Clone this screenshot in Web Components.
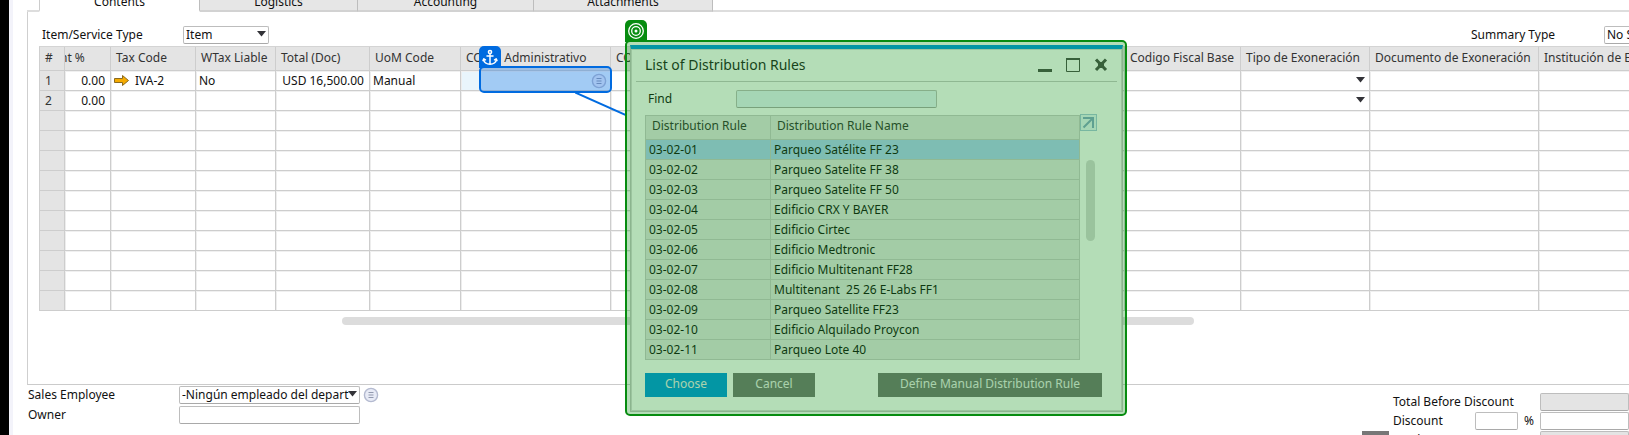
<!DOCTYPE html>
<html lang="es">
<head>
<meta charset="utf-8">
<title>Sales Order - Contents</title>
<style>
html,body{margin:0;height:100%}
body{font:12px/16px "Noto Sans","Open Sans",sans-serif;color:#111;background:#fff;overflow:hidden}
</style>
</head>
<body>
<order-window></order-window>
<script>
const define = (name, html, setup) => {
  const tpl = document.createElement('template');
  tpl.innerHTML = html;
  customElements.define(name, class extends HTMLElement {
    constructor() {
      super();
      this.attachShadow({mode: 'open'}).append(tpl.content.cloneNode(true));
    }
    connectedCallback() { if (setup) setup(this.shadowRoot, this); }
  });
};

define('link-icon', `<style>:host{display:block;width:16px;height:16px;flex:none}svg{display:block}</style>
<svg width="16" height="16" viewBox="0 0 16 16" fill="none"><circle cx="8" cy="8" r="6.6" fill="#e8ebf6" stroke="#b4bad0" stroke-width="1.4"/><path d="M5.5 5.5h5M5.5 8h5M5.5 10.5h5" stroke="#9299ae"/></svg>`);

define('drop-field', `<style>
:host{display:block;position:relative}
select{appearance:none;display:block;box-sizing:border-box;width:100%;height:18px;margin:0;padding:0 0 0 2px;border:1px solid #bdbdbd;border-bottom-color:#a9a9a9;border-radius:2px;background:#fff;font:inherit;line-height:16px;color:#111;overflow:hidden}
svg{position:absolute;right:3px;top:5px;pointer-events:none}
:host([plain]) select{border:0;background:none}
:host([plain]) svg{right:1px}
</style><select></select><svg width="9" height="6" viewBox="0 0 9 6"><path d="M0 0h9L4.5 5.5z" fill="#333338"/></svg>`, (root, host) => {
  const s = root.querySelector('select');
  s.setAttribute('aria-label', host.getAttribute('label'));
  if (host.getAttribute('value')) s.replaceChildren(new Option(host.getAttribute('value')));
});

define('text-field', `<style>
:host{display:block}
input{display:block;box-sizing:border-box;width:100%;height:18px;margin:0;padding:0 3px;border:1px solid #bdbdbd;border-bottom-color:#a9a9a9;border-radius:2px;background:var(--field,#fff);font:inherit}
</style><input type="text">`, (root, host) => {
  root.querySelector('input').setAttribute('aria-label', host.getAttribute('label'));
});

define('tab-strip', `<style>
:host{display:block;height:12px;overflow:hidden}
nav{display:flex;align-items:flex-end;height:12px}
.edge{width:12px;height:2px;background:#ddd}
.rest{flex:1;height:2px;background:#ddd}
button{flex:none;box-sizing:border-box;height:26px;margin:0;padding:7px 0 0;border:0;border-right:1px solid #bdbdbd;border-bottom:2px solid #d2d2d2;background:#e6e6e6;font:inherit;color:#111}
button[aria-selected=true]{background:#fff;border-left:1px solid #ccc;border-bottom-color:#fff}
.a{width:161px}.b{width:158px}.c{width:176px}.d{width:179px}
</style><nav role="tablist"><span class="edge"></span><button class="a" role="tab" aria-selected="true">Contents</button><button class="b" role="tab">Logistics</button><button class="c" role="tab">Accounting</button><button class="d" role="tab">Attachments</button><span class="rest"></span></nav>`);

define('item-grid', `<style>
:host{display:block;overflow:hidden}
table{table-layout:fixed;border-collapse:separate;border-spacing:0;width:1720px;border-left:1px solid #cfcfcf;border-top:1px solid #d4d4d4}
th,td{box-sizing:border-box;padding:0 3px;border-right:1px solid #cdcdcd;border-bottom:1px solid #cdcdcd;box-shadow:inset 0 1px #f0f0f0,inset 1px 0 #ededed;white-space:nowrap;overflow:hidden;font-weight:400;text-align:left;line-height:16px}
th{height:24px;padding:0 5px 2px;background:#e4e4e4;color:#333;box-shadow:none}
td{height:20px}
td:first-child{background:#e4e4e4;color:#333;padding-left:5px;box-shadow:none}
.n{text-align:right;padding-right:5px}
.cut{text-indent:-10px}
.tax{display:flex;align-items:center;gap:6px}
.hot{background:#e9f5fc}
.hot link-icon{margin-left:auto}
</style>
<table><colgroup></colgroup><thead><tr></tr></thead><tbody></tbody></table>`, root => {
  const cols = [['#',25],['nt %',46],['Tax Code',85],['WTax Liable',80],['Total (Doc)',94],['UoM Code',91],['COGS&nbsp; Administrativo',150],['COGS',150],['',150],['',130],['',84],['Codigo Fiscal Base',116],['Tipo de Exoneración',129],['Documento de Exoneración',169],['Institución de Exoneración',180]];
  const rest = 1719 - cols.reduce((a, c) => a + c[1], 0);
  root.querySelector('colgroup').innerHTML = cols.map(c => `<col style="width:${c[1]}px">`).join('') + `<col style="width:${rest}px">`;
  root.querySelector('thead tr').innerHTML = cols.map((c, i) => `<th scope="col"${i === 1 ? ' class="cut"' : ''}>${c[0]}</th>`).join('') + '<th></th>';
  const arrow = '<svg width="15" height="11" viewBox="0 0 15 11"><path d="M.5 3.500h8v-3l6 5-6 5v-3h-8z" fill="#f5ab00" stroke="#8a6a20"/></svg>';
  const drop = '<drop-field plain label="Tipo de Exoneración"></drop-field>';
  const rows = [
    {0:'1', 1:'0.00', 2:`<div class="tax">${arrow}IVA-2</div>`, 3:'No', 4:'USD 16,500.00', 5:'Manual', 6:'<link-icon></link-icon>', 12:drop},
    {0:'2', 1:'0.00', 12:drop}];
  while (rows.length < 12) rows.push({});
  root.querySelector('tbody').innerHTML = rows.map((r, y) => '<tr>' + Array.from({length: 16}, (_, x) =>
    `<td class="${x === 1 || x === 4 ? 'n' : ''}${x === 6 && y === 0 ? 'hot' : ''}">${r[x] || ''}</td>`).join('') + '</tr>').join('');
});

define('marker-box', `<style>
:host{display:block;box-sizing:border-box;position:absolute;pointer-events:none;border:2px solid var(--line);border-radius:5px;background:var(--tint)}
.tag{position:absolute;left:-2px;bottom:100%;width:22px;height:22px;border-radius:5px 5px 0 0;background:var(--line)}
</style><div class="tag"><slot></slot></div>`);

define('rules-dialog', `<style>
:host{display:block;box-sizing:border-box;background:#fff;border:1px solid #c4c4c4;box-shadow:inset 0 0 0 1px #dcdcdc;border-top:4px solid #0099e4;padding:0 5px}
header{display:flex;align-items:center;height:32px;border-bottom:1px solid #cacaca;padding:0 9px 0 9px;font-size:14px}
h2{flex:1;margin:0;font:inherit;color:#222}
header button{border:0;background:none;padding:0;margin:0 0 0 14px;height:14px;width:14px}
svg{display:block}
.find{display:flex;align-items:center;height:33px;padding-left:12px}
.find label{width:88px}
.find text-field{width:201px;--field:#e9f5fc}
.body{display:flex;padding-left:9px}
table{table-layout:fixed;width:435px;border-collapse:separate;border-spacing:0;border-left:1px solid #ccc;border-top:1px solid #ccc}
th,td{box-sizing:border-box;padding:0 3px;border-right:1px solid #ccc;border-bottom:1px solid #ccc;text-align:left;font-weight:400;background:#e7e7e7;white-space:pre;line-height:16px}
th:first-child{width:125px}
th{height:24px;padding:0 6px 3px;color:#333}
td{height:20px}
tr.on td{background:#b2d1fa}
aside{display:flex;flex-direction:column;align-items:center;gap:29px;width:17px}
.expand{box-sizing:border-box;border:1px solid #a9c9e0;background:#e9f5fc;padding:1px;margin:-1px 0 0;width:17px;height:17px}
.bar{width:9px;height:81px;border-radius:5px;background:#dadada;margin-left:3px}
footer{display:flex;gap:6px;padding:13px 15px 14px 9px}
footer button{height:24px;width:82px;border:0;border-radius:0;background:#767676;color:#f0f0f0;font:inherit;padding:0 0 2px}
footer .go{background:#0099e4}
footer .wide{width:224px;margin-left:auto}
</style>
<header><h2>List of Distribution Rules</h2>
<button aria-label="Minimize"><svg width="14" height="14"><path d="M0 12.500h14" stroke="#4b4b4b" stroke-width="3"/></svg></button>
<button aria-label="Maximize"><svg width="14" height="14"><path d="M.5 1h13v12.500H.5z" fill="none" stroke="#4b4b4b"/><path d="M0 1h14" stroke="#4b4b4b" stroke-width="2"/></svg></button>
<button aria-label="Close"><svg width="14" height="14"><path d="M2 1.500l10 10.500M12 1.500L2 12" stroke="#4b4b4b" stroke-width="3"/><path d="M4 4h6v6H4z" fill="#4b4b4b"/></svg></button></header>
<div class="find"><label>Find</label><text-field label="Find"></text-field></div>
<div class="body"><table><thead><tr><th scope="col">Distribution Rule</th><th scope="col">Distribution Rule Name</th></tr></thead><tbody></tbody></table>
<aside><button class="expand" aria-label="Expand"><svg width="13" height="13"><path d="M1 2h10V12M10.500 2.500L1.500 11.500" fill="none" stroke="#85a8c8" stroke-width="2"/></svg></button><div class="bar"></div></aside></div>
<footer><button class="go">Choose</button><button>Cancel</button><button class="wide">Def<u>i</u>ne Manual Distribution Rule</button></footer>`, root => {
  const names = ['Parqueo Satélite FF 23','Parqueo Satelite FF 38','Parqueo Satelite FF 50','Edificio CRX Y BAYER','Edificio Cirtec','Edificio Medtronic','Edificio Multitenant FF28','Multitenant  25 26 E-Labs FF1','Parqueo Satellite FF23','Edificio Alquilado Proycon','Parqueo Lote 40'];
  root.querySelector('tbody').innerHTML = names.map((n, i) => `<tr${i ? '' : ' class="on"'}><td>03-02-${String(i + 1).padStart(2, '0')}</td><td>${n}</td></tr>`).join('');
});

define('order-footer', `<style>
:host{display:flex;justify-content:space-between;padding:1px 0 0 1px}
.l{display:grid;grid-template-columns:151px 181px 19px;row-gap:2px;align-items:center;align-content:start}
.l link-icon{margin-left:3px}
.r{display:grid;grid-template-columns:27px 86px 43px 22px 89px;row-gap:1px;align-items:center;align-content:start;padding-top:7px}
.r label{margin-left:4px;white-space:nowrap}
.dark{grid-column:1;height:18px;background:#777}
.r .span{grid-column:2/5}.r .disc{grid-column:2}
.pc{text-align:center}
.gray{--field:#e4e4e4}
</style>
<div class="l"><label>Sales Employee</label><drop-field label="Sales Employee" value="-Ningún empleado del depart"></drop-field><link-icon></link-icon>
<label>Owner</label><text-field label="Owner"></text-field></div>
<div class="r"><label class="span">Total Before Discount</label><text-field class="gray" label="Total Before Discount"></text-field>
<label class="disc">Discount</label><text-field label="Discount percent"></text-field><span class="pc">%</span><text-field label="Discount"></text-field>
<div class="dark"></div><label class="span">Total Down Payment</label><text-field class="gray" label="Total Down Payment"></text-field></div>`);

define('order-window', `<style>
:host{display:flex;position:relative;height:100%;min-height:435px;overflow:hidden}
.black{flex:none;width:9px;background:#000}
.rim{flex:none;width:4px;background:#f3f3fa}
main{flex:1;min-width:0;padding-left:14px}
.panel{box-sizing:border-box;border-left:1px solid #cfcfcf;border-bottom:1px solid #cbcbcb;padding:14px 0 59px 11px}
.line{display:flex;align-items:center;height:18px;margin-bottom:2px}
.line .k{width:144px;padding-left:3px;box-sizing:border-box}
.line .item{width:86px}
.line .sum{margin-left:auto;width:133px}
.line .sumsel{flex:none;width:120px;margin-right:-95px}
.bar{height:8px;border-radius:4px;background:#dcdcdc;margin:6px 435px 0 303px}
rules-dialog{position:absolute;left:630px;top:45px;width:493px}
.blue{left:479px;top:66px;width:133px;height:27px;--line:#006be0;--tint:rgba(0,105,225,.3)}
.green{left:625px;top:40px;width:502px;height:376px;--line:#078c10;--tint:rgba(10,143,20,.306)}
.wire{position:absolute;left:575px;top:91px}
svg{display:block}
</style>
<div class="black"></div><div class="rim"></div>
<main><tab-strip></tab-strip>
<section class="panel"><div class="line"><label class="k">Item/Service Type</label><drop-field class="item" label="Item/Service Type" value="Item"></drop-field><label class="sum">Summary Type</label><drop-field class="sumsel" label="Summary Type" value="No Summary"></drop-field></div>
<item-grid></item-grid><div class="bar"></div></section>
<order-footer></order-footer></main>
<svg class="wire" width="52" height="26"><path d="M0 1.500L52 24.500" stroke="#006be0" stroke-width="2"/></svg>
<rules-dialog></rules-dialog>
<marker-box class="blue"><svg width="22" height="22" viewBox="0 0 22 22" fill="none" stroke="#fff" stroke-width="1.500" stroke-linecap="round" stroke-linejoin="round"><circle cx="11" cy="6" r="1.600"/><path d="M11 7.600V18M8 10h6M4.700 13c0 3.500 3 5.200 6.300 5.200s6.300-1.700 6.300-5.200M4 14.500l.8-1.700 1.700 1M18 14.500l-.8-1.700-1.700 1"/></svg></marker-box>
<marker-box class="green"><svg width="22" height="22" viewBox="0 0 22 22" fill="none" stroke="#fff" stroke-width="1.300"><circle cx="11" cy="11" r="7.300"/><circle cx="11" cy="11" r="4.300"/><circle cx="11" cy="11" r="1.500" fill="#fff" stroke="none"/></svg></marker-box>`);
</script>
</body>
</html>
